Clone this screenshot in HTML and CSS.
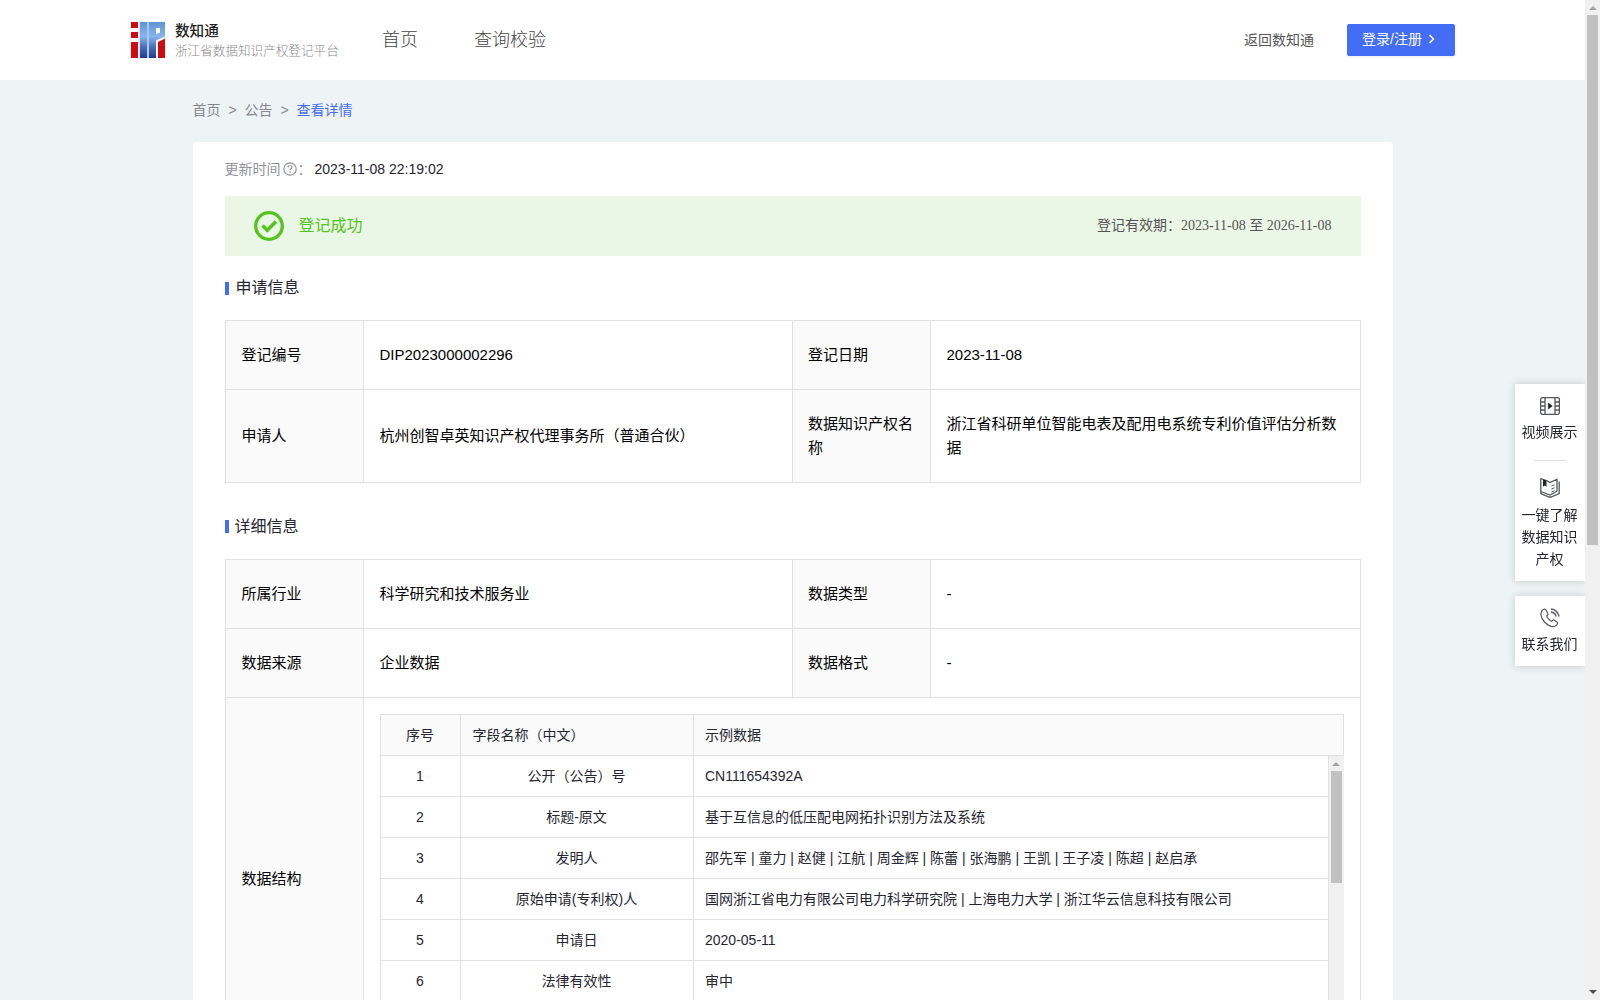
FILE: index.html
```html
<!DOCTYPE html>
<html lang="zh-CN">
<head>
<meta charset="utf-8">
<title>数知通 - 公告详情</title>
<link rel="stylesheet" href="styles.css">
</head>
<body>
<div class="page">
  <header class="header">
    <svg class="logo" width="34" height="36" viewBox="0 0 34 36">
      <defs><linearGradient id="lg" x1="0" y1="0" x2="0" y2="1"><stop offset="0" stop-color="#5f92d2"/><stop offset=".4" stop-color="#86b6ec"/><stop offset=".7" stop-color="#4a6fb5"/><stop offset="1" stop-color="#22398a"/></linearGradient></defs>
      <path fill="#a9c8ea" d="M8.500 0H34v15l-9 3.500V36H8.500z"/>
      <path fill="#cf0a10" d="M0 0h7v6H0zM0 10h7v6H0zM0 20h7v16H0zM27 20l7-3.500V36h-7z"/>
      <path fill="url(#lg)" d="M9 0h7v36H9zM18 0h16v14l-9 4V36h-7zM25 6v6l4-1.500V6z" fill-rule="evenodd"/>
      <path fill="#fff" d="M25 6h4v4.500L25 12z"/>
    </svg>
    <div class="brand">
      <strong class="brand-name">数知通</strong>
      <span class="brand-sub">浙江省数据知识产权登记平台</span>
    </div>
    <nav class="nav"><a>首页</a><a>查询校验</a></nav>
    <a class="back">返回数知通</a>
    <a class="login"><span>登录/注册</span><svg width="7" height="10" viewBox="0 0 7 10"><path d="M1.500 1l4 4-4 4" fill="none" stroke="#fff" stroke-width="1.500"/></svg></a>
  </header>

  <div class="crumbs"><span>首页</span><i>&gt;</i><span>公告</span><i>&gt;</i><span class="current">查看详情</span></div>

  <main class="card">
    <div class="updated">
      <span>更新时间</span>
      <svg width="14" height="14" viewBox="0 0 14 14"><circle cx="7" cy="7" r="6.200" fill="none" stroke="#909399" stroke-width="1.200"/><path d="M5 5.600c0-2.500 4-2.500 4 0 0 1.200-2 1.300-2 2.700M7 9.300v1.400" fill="none" stroke="#909399" stroke-width="1.200"/></svg>
      <span class="colon">：</span>
      <span class="time">2023-11-08 22:19:02</span>
    </div>
    <div class="status">
      <svg width="30" height="30" viewBox="0 0 30 30"><circle cx="15" cy="15" r="13.300" fill="none" stroke="#52c41a" stroke-width="3.300"/><path d="M8.500 14.500l4.800 4.800 8.700-8.800" fill="none" stroke="#52c41a" stroke-width="3.600"/></svg>
      <span class="status-text">登记成功</span>
      <span class="valid">登记有效期：<span class="dates">2023-11-08 至 2026-11-08</span></span>
    </div>

    <h2 class="heading">申请信息</h2>
    <table class="info">
      <tr><th>登记编号</th><td>DIP2023000002296</td><th>登记日期</th><td>2023-11-08</td></tr>
      <tr class="tall"><th>申请人</th><td>杭州创智卓英知识产权代理事务所（普通合伙）</td><th>数据知识产权名称</th><td>浙江省科研单位智能电表及配用电系统专利价值评估分析数据</td></tr>
    </table>

    <h2 class="heading">详细信息</h2>
    <table class="info">
      <tr><th>所属行业</th><td>科学研究和技术服务业</td><th>数据类型</th><td>-</td></tr>
      <tr><th>数据来源</th><td>企业数据</td><th>数据格式</th><td>-</td></tr>
      <tr class="structure"><th>数据结构</th><td colspan="3">
        <div class="fields">
          <div class="row head"><span>序号</span><span>字段名称（中文）</span><span>示例数据</span></div>
          <div class="scroller">
            <div class="rows">
              <div class="row"><span>1</span><span>公开（公告）号</span><span>CN111654392A</span></div>
              <div class="row"><span>2</span><span>标题-原文</span><span>基于互信息的低压配电网拓扑识别方法及系统</span></div>
              <div class="row"><span>3</span><span>发明人</span><span>邵先军 | 童力 | 赵健 | 江航 | 周金辉 | 陈蕾 | 张海鹏 | 王凯 | 王子凌 | 陈超 | 赵启承</span></div>
              <div class="row"><span>4</span><span>原始申请(专利权)人</span><span>国网浙江省电力有限公司电力科学研究院 | 上海电力大学 | 浙江华云信息科技有限公司</span></div>
              <div class="row"><span>5</span><span>申请日</span><span>2020-05-11</span></div>
              <div class="row"><span>6</span><span>法律有效性</span><span>审中</span></div>
            </div>
            <div class="bar inner"><b class="up"></b><b class="thumb"></b></div>
          </div>
        </div>
      </td></tr>
    </table>
  </main>
</div>

<aside class="side">
  <div class="side-box">
    <svg width="20" height="18" viewBox="0 0 20 18" fill="none" stroke="#55575f" stroke-width="1.300"><rect x=".6" y=".6" width="18.800" height="16.800" rx="2"/><path d="M5 .6v16.800M15 .6v16.800M.6 5H5M.6 9H5M.6 13H5M15 5h4.400M15 9h4.400M15 13h4.400"/><path d="M8.300 6v6l4-3z" fill="#22242c" stroke="#22242c" stroke-width=".6"/></svg>
    <span>视频展示</span>
    <hr>
    <svg class="book" width="20" height="20" viewBox="0 0 20 20" fill="none" stroke="#55575f" stroke-width="1.300"><path d="M3 1.200L.8 1v14.500L9 19h2l8.200-3.500V3.500M6.500 2.500L10 4.500l7-3.300v12L10 17 .8 13.500"/><path d="M11.500 8l3-1.200M11.500 11l3-1.200M11.500 14l3-1.200" stroke-width="1"/><path d="M3 1l3.500 1v7L5 7.500 3 8.500z" fill="#22242c" stroke="none"/></svg>
    <span>一键了解数据知识产权</span>
  </div>
  <div class="side-box contact">
    <svg width="20" height="20" viewBox="0 0 20 20" fill="none" stroke="#55575f" stroke-width="1.200"><path d="M3.200 1.500C-.5 4 .5 9.500 4.500 14c4 4.500 9.500 6 12 3.200 1.400-1.600 1.400-2.400.4-3.200l-2.600-1.800c-1-.7-1.700-.1-2.500 1-1.500-.2-5-3.700-5.200-5.400 1.200-.8 1.900-1.500 1.200-2.600L6 2C5.200.8 4.300.8 3.200 1.500z"/><path d="M11 1c4 .2 7.500 3.500 8 7.500M11 4c3 .3 4.600 2 5 4.500" stroke-width="1.500"/></svg>
    <span>联系我们</span>
  </div>
</aside>
<div class="bar page-bar"><b class="up"></b><b class="thumb"></b><b class="down"></b></div>
</body>
</html>
```
FILE: styles.css
```css
* { box-sizing: border-box; }
body {
  margin: 0;
  height: 1000px;
  overflow: hidden;
  display: flex;
  background: #eef3f6;
  color: #252632;
  font: 14px/22px "Liberation Sans", "Noto Sans CJK SC", sans-serif;
}
svg { display: block; flex: none; }
.page { width: 1585px; height: 1000px; overflow: hidden; }

.header { display: flex; align-items: center; height: 80px; padding: 0 130px 0 131px; background: #fff; }
.logo { margin-right: 10px; }
.brand { display: flex; flex-direction: column; width: 163px; padding-top: 1px; white-space: nowrap; }
.brand-name { font-size: 14.600px; font-weight: 500; line-height: 20px; color: #222; }
.brand-sub { font-size: 12.600px; font-weight: 300; line-height: 20px; color: #888; }
.nav { display: flex; gap: 56px; margin-left: 44px; font-size: 18px; font-weight: 300; color: #444; }
.back { margin-left: auto; margin-right: 33px; padding-bottom: 1px; color: #555; }
.login {
  display: flex; align-items: center; gap: 6px;
  width: 108px; height: 32px; padding: 0 0 2px 15px;
  border-radius: 2px; background: #446df6; color: #fff;
  box-shadow: 0 2px 0 rgba(0, 0, 0, .045);
}

.crumbs { display: flex; margin: 19px 0 21px 192.500px; height: 22px; color: #86888e; }
.crumbs i { width: 24px; text-align: center; font-style: normal; }
.crumbs .current { color: #446df6; }

.card { width: 1200px; margin-left: 192.500px; padding: 0 32px; border-radius: 4px; background: #fff; }
.updated { display: flex; align-items: center; height: 54px; color: #909399; }
.updated svg { margin-left: 2px; }
.updated .colon { width: 14px; padding-left: 1px; }
.updated .time { margin-left: 4px; color: #252632; }

.status { display: flex; align-items: center; height: 60px; padding: 0 29px; background: #ebf7e6; }
.status-text { margin-left: 15px; font-size: 16px; color: #52c41a; }
.valid { margin-left: auto; padding-bottom: 2px; color: #555; }
.dates { font-family: "Liberation Serif", "Noto Sans CJK SC", serif; }

.heading {
  display: flex; align-items: center; gap: 7px;
  height: 64px; margin: 0;
  font-size: 16px; line-height: 24px; font-weight: 400;
}
.heading::before { content: ""; width: 4px; height: 13px; background: #446df6; }
.info + .heading { height: 76px; padding-top: 11px; gap: 6px; }

.info {
  width: 1136px; table-layout: fixed;
  border-collapse: collapse;
  font-size: 15px; line-height: 24px; color: #000;
}
.info th, .info td { height: 69px; padding: 0 16px; border: 1px solid #e1e1e1; text-align: left; font-weight: 400; }
.info th { width: 138px; padding-bottom: 1px; background: #fafafa; }
.info th:nth-child(3) { padding-left: 15px; }
.info td:nth-child(4) { padding-left: 15.500px; }
.info .tall th, .info .tall td { height: 93px; padding-bottom: 1px; }
.info .structure th { height: 362px; }
.info .structure td { padding: 16px; vertical-align: top; }

.fields { border: 1px solid #e1e1e1; border-bottom: 0; font-size: 14px; color: #252632; }
.row { display: grid; grid-template-columns: 79px 233px 1fr; height: 41px; line-height: 40px; border-bottom: 1px solid #e1e1e1; }
.row span { padding: 0 12px; border-left: 1px solid #e1e1e1; white-space: nowrap; }
.row span:first-child { border-left: 0; text-align: center; }
.row:not(.head) span:nth-child(2) { text-align: center; }
.row span:last-child { padding-left: 11.500px; }
.head { background: #fafafa; }
.scroller { display: flex; height: 288px; margin-right: -1px; overflow: hidden; }
.rows { flex: 1; border-right: 1px solid #e1e1e1; }

.bar { display: flex; flex-direction: column; align-items: center; width: 15px; background: #f1f1f1; }
.bar .up, .bar .down { width: 0; height: 0; border: 4px solid transparent; border-top: 0; border-bottom-color: #a3a3a3; }
.bar .up { margin: 6px 0 5px; }
.bar .thumb { width: 11px; background: #c1c1c1; }
.bar .down { border: 4px solid transparent; border-bottom: 0; border-top-color: #505050; margin: auto 0 6px; }
.inner .thumb { height: 112px; }
.page-bar { height: 1000px; }
.page-bar .thumb { width: 11px; height: 530px; }

.side { position: fixed; top: 384px; right: 15px; width: 70px; display: flex; flex-direction: column; gap: 15px; }
.side-box {
  display: flex; flex-direction: column; align-items: center;
  height: 197px; padding: 13px 6px 0;
  background: #fff; box-shadow: 0 0 8px rgba(0, 0, 0, .18);
  text-align: center; clip-path: inset(-10px 0 -10px -10px);
}
.side-box span { margin: 6px 1px 0 0; width: 57px; }
.side-box hr { width: 32px; height: 1px; margin: 17px 0 17px; border: 0; background: #dcdfe3; }
.side-box .book + span { margin-top: 6px; }
.side-box.contact { height: 70px; padding-top: 12px; }
.side-box.contact span { margin-top: 5px; }
```
